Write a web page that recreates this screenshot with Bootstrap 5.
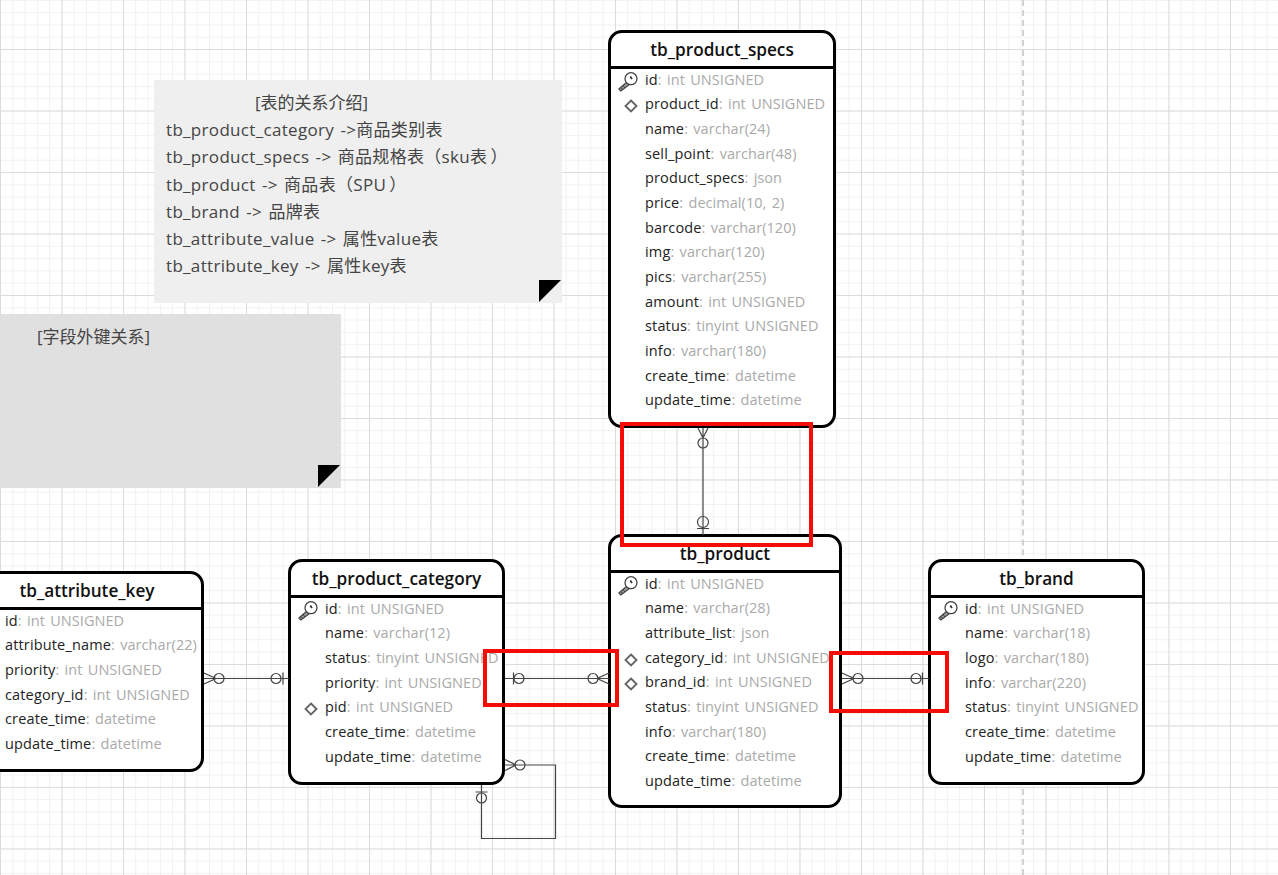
<!DOCTYPE html>
<html lang="zh">
<head>
<meta charset="utf-8">
<title>ER diagram</title>
<link href="https://cdn.jsdelivr.net/npm/bootstrap@5.3.0/dist/css/bootstrap.min.css" rel="stylesheet">
<style>
html,body{margin:0;height:100%;overflow:hidden;background:#fff}
.er-canvas{position:relative;width:1278px;height:875px;overflow:hidden;font-family:"Open Sans","Noto Sans","Noto Sans CJK SC",sans-serif;
 background-color:#fff;
 background-image:
  linear-gradient(90deg,#dcdcdc 1px,transparent 1px),
  linear-gradient(0deg,#dcdcdc 1px,transparent 1px),
  linear-gradient(90deg,#f1f1f1 1px,transparent 1px),
  linear-gradient(0deg,#f1f1f1 1px,transparent 1px);
 background-size:61.5px 61.5px,61.5px 61.5px,12.3px 12.3px,12.3px 12.3px;
 background-position:0 50px,0 50px,0 50px,0 50px;}
.page-guide{position:absolute;left:1022px;top:0;height:875px;border-left:2px dashed #d2d2d2}
.er-note{position:absolute;color:#444;font-size:17px;letter-spacing:.32px;word-spacing:1.5px}
.er-note-a{left:154px;top:80px;width:408px;height:223px;background:#efefef;padding:9px 12px}
.er-note-b{left:-10px;top:314px;width:351px;height:174px;background:#e0e0e0;padding:9px 47px}
.er-note-line{height:27.2px;line-height:27.2px;white-space:nowrap}
.er-note-title{letter-spacing:0}
.er-note-a .er-note-title{padding-left:89px}
.er-fold{position:absolute;right:1px;bottom:1px;width:22px;height:22px;background:#000;clip-path:polygon(0 0,100% 0,0 100%)}
.er-entity{position:absolute;background:#fff;border:3px solid #000;border-radius:14px;overflow:hidden;color:#222}
.er-head{height:36px;line-height:33px;text-align:center;font-size:17.2px;font-weight:600;color:#111;border-bottom:3px solid #000}
.er-body{margin-top:-1.2px}
.er-row{position:relative;height:24.65px;line-height:24.65px;font-size:14.5px;letter-spacing:.15px;padding-left:34px;white-space:nowrap}
.er-row span{color:#aaa;letter-spacing:.05px;word-spacing:1.5px}
.er-noicon .er-row{padding-left:0}
.er-icon{position:absolute;left:7px;top:0;width:24px;height:24px}
.er-links{position:absolute;left:0;top:0;width:1278px;height:875px;pointer-events:none}
.er-links .lnk{fill:none;stroke:#444;stroke-width:1.2}
.er-links .hot{fill:none;stroke:#f50d05;stroke-width:4}
</style>
</head>
<body>
<div class="er-canvas">
  <div class="page-guide"></div>

  <svg width="0" height="0" class="d-block position-absolute">
    <symbol id="ico-key" viewBox="0 0 24 24">
      <path d="M.8 21 9 14 11.500 16.500 2.800 23Z" fill="#9a9a9a" stroke="#444" stroke-width="1.100" stroke-linejoin="round"/>
      <path d="M2.800 19.500 4.600 21.600M5 17.600 6.800 19.700" stroke="#333" fill="none"/>
      <circle cx="13" cy="10.700" r="6" fill="#fff" stroke="#444" stroke-width="1.300"/>
      <path d="M12.300 8.500 14 11" stroke="#333" stroke-width="1.800" fill="none"/>
    </symbol>
    <symbol id="ico-fk" viewBox="0 0 24 24">
      <path d="M13 8.500 18.500 14 13 19.500 7.500 14Z" fill="#fff" stroke="#666" stroke-width="1.900"/>
    </symbol>
  </svg>

  <div class="er-note er-note-a">
    <div class="er-note-line er-note-title">[表的关系介绍]</div>
    <div class="er-note-line">tb_product_category -&gt;商品类别表</div>
    <div class="er-note-line">tb_product_specs -&gt; 商品规格表（sku表&#8201;）</div>
    <div class="er-note-line">tb_product -&gt; 商品表（SPU&#8201;）</div>
    <div class="er-note-line">tb_brand -&gt; 品牌表</div>
    <div class="er-note-line">tb_attribute_value -&gt; 属性value表</div>
    <div class="er-note-line">tb_attribute_key -&gt; 属性key表</div>
    <div class="er-fold"></div>
  </div>
  <div class="er-note er-note-b">
    <div class="er-note-line er-note-title">[字段外键关系]</div>
    <div class="er-fold"></div>
  </div>

  <div class="er-entity" style="left:608px;top:30px;width:228px;height:398px">
    <div class="er-head">tb_product_specs</div>
    <div class="er-body">
      <div class="er-row"><svg class="er-icon"><use href="#ico-key"/></svg>id<span>: int UNSIGNED</span></div>
      <div class="er-row"><svg class="er-icon"><use href="#ico-fk"/></svg>product_id<span>: int UNSIGNED</span></div>
      <div class="er-row">name<span>: varchar(24)</span></div>
      <div class="er-row">sell_point<span>: varchar(48)</span></div>
      <div class="er-row">product_specs<span>: json</span></div>
      <div class="er-row">price<span>: decimal(10, 2)</span></div>
      <div class="er-row">barcode<span>: varchar(120)</span></div>
      <div class="er-row">img<span>: varchar(120)</span></div>
      <div class="er-row">pics<span>: varchar(255)</span></div>
      <div class="er-row">amount<span>: int UNSIGNED</span></div>
      <div class="er-row">status<span>: tinyint UNSIGNED</span></div>
      <div class="er-row">info<span>: varchar(180)</span></div>
      <div class="er-row">create_time<span>: datetime</span></div>
      <div class="er-row">update_time<span>: datetime</span></div>
    </div>
  </div>

  <div class="er-entity" style="left:608px;top:534px;width:234px;height:274px">
    <div class="er-head">tb_product</div>
    <div class="er-body">
      <div class="er-row"><svg class="er-icon"><use href="#ico-key"/></svg>id<span>: int UNSIGNED</span></div>
      <div class="er-row">name<span>: varchar(28)</span></div>
      <div class="er-row">attribute_list<span>: json</span></div>
      <div class="er-row"><svg class="er-icon"><use href="#ico-fk"/></svg>category_id<span>: int UNSIGNED</span></div>
      <div class="er-row"><svg class="er-icon"><use href="#ico-fk"/></svg>brand_id<span>: int UNSIGNED</span></div>
      <div class="er-row">status<span>: tinyint UNSIGNED</span></div>
      <div class="er-row">info<span>: varchar(180)</span></div>
      <div class="er-row">create_time<span>: datetime</span></div>
      <div class="er-row">update_time<span>: datetime</span></div>
    </div>
  </div>

  <div class="er-entity" style="left:928px;top:559px;width:217px;height:226px">
    <div class="er-head">tb_brand</div>
    <div class="er-body">
      <div class="er-row"><svg class="er-icon"><use href="#ico-key"/></svg>id<span>: int UNSIGNED</span></div>
      <div class="er-row">name<span>: varchar(18)</span></div>
      <div class="er-row">logo<span>: varchar(180)</span></div>
      <div class="er-row">info<span>: varchar(220)</span></div>
      <div class="er-row">status<span>: tinyint UNSIGNED</span></div>
      <div class="er-row">create_time<span>: datetime</span></div>
      <div class="er-row">update_time<span>: datetime</span></div>
    </div>
  </div>

  <div class="er-entity" style="left:288px;top:559px;width:217px;height:226px">
    <div class="er-head">tb_product_category</div>
    <div class="er-body">
      <div class="er-row"><svg class="er-icon"><use href="#ico-key"/></svg>id<span>: int UNSIGNED</span></div>
      <div class="er-row">name<span>: varchar(12)</span></div>
      <div class="er-row">status<span>: tinyint UNSIGNED</span></div>
      <div class="er-row">priority<span>: int UNSIGNED</span></div>
      <div class="er-row"><svg class="er-icon"><use href="#ico-fk"/></svg>pid<span>: int UNSIGNED</span></div>
      <div class="er-row">create_time<span>: datetime</span></div>
      <div class="er-row">update_time<span>: datetime</span></div>
    </div>
  </div>

  <div class="er-entity" style="left:-30px;top:571px;width:234px;height:201px">
    <div class="er-head">tb_attribute_key</div>
    <div class="er-body" style="padding-left:32px">
      <div class="er-noicon">
      <div class="er-row">id<span>: int UNSIGNED</span></div>
      <div class="er-row">attribute_name<span>: varchar(22)</span></div>
      <div class="er-row">priority<span>: int UNSIGNED</span></div>
      <div class="er-row">category_id<span>: int UNSIGNED</span></div>
      <div class="er-row">create_time<span>: datetime</span></div>
      <div class="er-row">update_time<span>: datetime</span></div>
      </div>
    </div>
  </div>

  <svg class="er-links" viewBox="0 0 1278 875">
    <g class="lnk">
      <path d="M703 428V535M698 428 703 438 708 428M697 528.500H709"/>
      <circle cx="703" cy="443" r="5"/><circle cx="703" cy="522" r="5.500"/>
      <path d="M204 678.500H289M204 673 216 678.500 204 684M283 672.500V684.500"/>
      <circle cx="219" cy="678.500" r="5"/><circle cx="276" cy="678.500" r="5"/>
      <path d="M505 678.500H609M513.500 672.500V684.500M609 673 597 678.500 609 684"/>
      <circle cx="519" cy="678.500" r="5"/><circle cx="593" cy="678.500" r="5"/>
      <path d="M842 678.500H929M842 673 854 678.500 842 684M922.500 672.500V684.500"/>
      <circle cx="858" cy="678.500" r="5"/><circle cx="916" cy="678.500" r="5"/>
      <path d="M505 765H555.500V838.500H481.500V785M505 759.500 516 765 505 770.500M475.500 792H487.500"/>
      <circle cx="520" cy="765" r="5"/><circle cx="481.500" cy="798" r="5"/>
    </g>
    <g class="hot">
      <rect x="622" y="424" width="189" height="121"/>
      <rect x="485" y="651" width="132" height="54"/>
      <rect x="831" y="653" width="116" height="58"/>
    </g>
  </svg>
</div>
<script src="https://cdn.jsdelivr.net/npm/bootstrap@5.3.0/dist/js/bootstrap.bundle.min.js"></script>
</body>
</html>
